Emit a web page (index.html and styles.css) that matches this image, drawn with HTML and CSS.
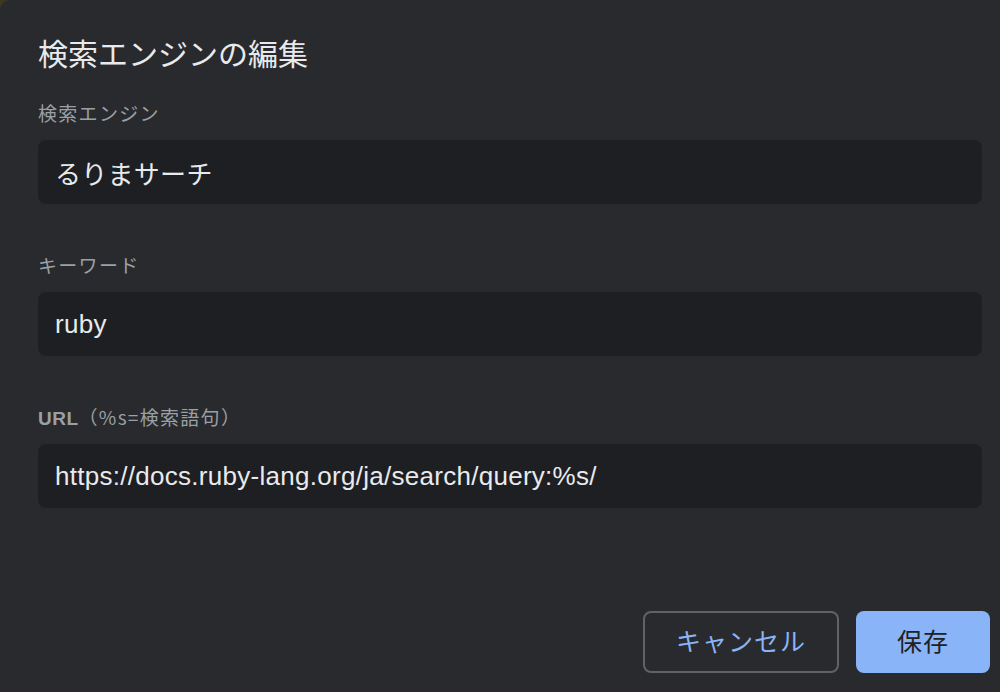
FILE: index.html
```html
<!DOCTYPE html>
<html lang="ja">
<head>
<meta charset="utf-8">
<link rel="stylesheet" href="styles.css">
</head>
<body>
<div class="dialog">
  <h1 class="title">検索エンジンの編集</h1>
  <div class="field">
    <div class="label">検索エンジン</div>
    <div class="input">るりまサーチ</div>
  </div>
  <div class="field">
    <div class="label">キーワード</div>
    <div class="input">ruby</div>
  </div>
  <div class="field">
    <div class="label"><span class="latin">URL</span>（%s=検索語句）</div>
    <div class="input">https://docs.ruby-lang.org/ja/search/query:%s/</div>
  </div>
  <div class="actions">
    <button class="btn cancel">キャンセル</button>
    <button class="btn save">保存</button>
  </div>
</div>
</body>
</html>
```

FILE: styles.css
```css
html, body {
  margin: 0;
  padding: 0;
  width: 1000px;
  height: 692px;
  overflow: hidden;
  background: #3c3a1e;
}
body {
  font-family: "Liberation Sans", "Noto Sans CJK JP", sans-serif;
}
.dialog {
  box-sizing: border-box;
  width: 1000px;
  height: 692px;
  background: #292a2d;
  border-top-left-radius: 10px;
  padding: 32px 18px 0 38px;
  display: flex;
  flex-direction: column;
}
.title {
  margin: 0;
  font-size: 30px;
  line-height: 40px;
  height: 40px;
  font-weight: 400;
  color: #e8eaed;
  font-family: "Noto Sans CJK JP", sans-serif;
}
.field {
  display: flex;
  flex-direction: column;
  margin-top: 29px;
}
.field + .field {
  margin-top: 49px;
}
.label {
  font-family: "Noto Sans CJK JP", sans-serif;
  font-size: 19px;
  letter-spacing: 1.3px;
  line-height: 24px;
  height: 24px;
  color: #9aa0a6;
  font-weight: 400;
}
.label .latin {
  font-family: "Liberation Sans", sans-serif;
  font-weight: 700;
  letter-spacing: 0.5px;
  line-height: 24px;
}
.input {
  margin-top: 15px;
  height: 64px;
  box-sizing: border-box;
  background: #1e1f22;
  border-radius: 8px;
  padding: 0 17px;
  display: flex;
  align-items: center;
  font-size: 26px;
  letter-spacing: 0.28px;
  color: #e8eaed;
}
.actions {
  display: flex;
  justify-content: flex-end;
  gap: 17px;
  margin-top: 103px;
  margin-right: -8px;
}
.btn {
  height: 62px;
  border-radius: 8px;
  font-family: "Noto Sans CJK JP", sans-serif;
  font-size: 25px;
  letter-spacing: 1px;
  line-height: 1;
  padding: 0 0 4px;
  cursor: pointer;
  box-sizing: border-box;
}
.cancel {
  width: 196px;
  background: transparent;
  border: 2px solid #5f6368;
  color: #8ab4f8;
}
.save {
  width: 134px;
  background: #8ab4f8;
  border: none;
  color: #202124;
}
```
